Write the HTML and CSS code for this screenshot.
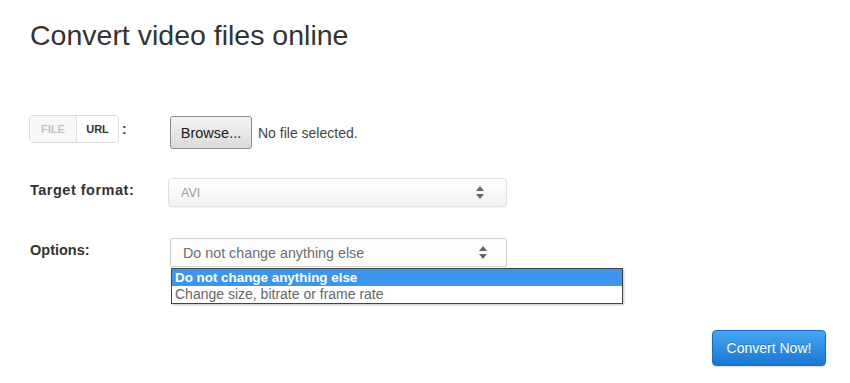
FILE: index.html
```html
<!DOCTYPE html>
<html>
<head>
<meta charset="utf-8">
<link rel="stylesheet" href="styles.css">
</head>
<body>
<div class="page">
  <h1 class="title">Convert video files online</h1>
  <div class="form">
    <div class="row row-file">
      <div class="label-cell">
        <div class="toggle"><span class="tab tab-file">FILE</span><span class="tab tab-url">URL</span></div>
        <span class="colon">:</span>
      </div>
      <div class="control">
        <button class="browse">Browse...</button>
        <span class="nofile">No file selected.</span>
      </div>
    </div>
    <div class="row row-target">
      <div class="label-cell"><span class="label label-target">Target format:</span></div>
      <div class="select select-target">
        <span class="value">AVI</span>
        <svg class="arrows" width="8" height="13" viewBox="0 0 8 13"><path d="M4 0 L8 5 L0 5 Z M0 8 L8 8 L4 13 Z" fill="#666"/></svg>
      </div>
    </div>
    <div class="row row-options">
      <div class="label-cell"><span class="label">Options:</span></div>
      <div class="opt-wrap">
        <div class="select select-options">
          <span class="value">Do not change anything else</span>
          <svg class="arrows" width="8" height="13" viewBox="0 0 8 13"><path d="M4 0 L8 5 L0 5 Z M0 8 L8 8 L4 13 Z" fill="#666"/></svg>
        </div>
        <ul class="dropdown">
          <li class="item item-active">Do not change anything else</li>
          <li class="item">Change size, bitrate or frame rate</li>
        </ul>
      </div>
    </div>
  </div>
  <div class="actions">
    <button class="convert">Convert Now!</button>
  </div>
</div>
</body>
</html>
```
FILE: styles.css
```css
html, body {
  margin: 0;
  padding: 0;
  background: #ffffff;
}
body {
  font-family: "Liberation Sans", Arial, sans-serif;
  color: #333;
  width: 850px;
  height: 383px;
  overflow: hidden;
}
.page {
  padding: 19px 24px 0 30px;
}
.title {
  margin: 0;
  font-size: 28.5px;
  line-height: 32px;
  font-weight: normal;
  color: #333;
}
.form {
  margin-top: 64px;
  display: flex;
  flex-direction: column;
}
.row {
  display: flex;
  align-items: flex-start;
}
.label-cell {
  width: 140px;
  flex: none;
  display: flex;
  align-items: center;
}
.label {
  font-size: 14.5px;
  font-weight: bold;
  color: #333;
}
.label-target {
  letter-spacing: 0.5px;
}
.row-file {
  height: 34px;
}
.row-file .label-cell {
  height: 28px;
}
.toggle {
  display: flex;
  width: 90px;
  height: 28px;
  box-sizing: border-box;
  border: 1px solid #dcdcdc;
  border-radius: 4px;
  overflow: hidden;
  margin-left: -1px;
}
.tab {
  display: flex;
  align-items: center;
  justify-content: center;
  font-size: 11px;
  font-weight: bold;
}
.tab-file {
  width: 46px;
  color: #c4c4c4;
  background: #f8f8f8;
  border-right: 1px solid #e2e2e2;
}
.tab-url {
  flex: 1;
  color: #333;
  background: #fff;
}
.colon {
  margin-left: 3px;
  font-size: 14px;
  font-weight: bold;
  color: #444;
}
.control {
  display: flex;
  align-items: center;
  margin-top: 1px;
}
.browse {
  width: 82px;
  height: 33px;
  box-sizing: border-box;
  border: 1px solid #8c8c8c;
  border-radius: 3px;
  background: linear-gradient(#f4f4f4, #dadada);
  font-family: "Liberation Sans", Arial, sans-serif;
  font-size: 14.5px;
  color: #222;
  padding: 0;
}
.nofile {
  margin-left: 6px;
  font-size: 14px;
  color: #444;
}
.row-target {
  margin-top: 29px;
}
.row-target .label-cell,
.row-options .label-cell {
  height: 24px;
}
.select {
  position: relative;
  box-sizing: border-box;
  height: 29px;
  display: flex;
  align-items: center;
  justify-content: space-between;
}
.select-target {
  width: 339px;
  margin-left: -2px;
  border: 1px solid #e0e0e0;
  border-radius: 4px;
  background: linear-gradient(#ffffff, #f2f2f2);
  box-shadow: 0 1px 2px rgba(0,0,0,0.06);
  padding: 0 22px 0 12px;
}
.select-target .value {
  font-size: 12.5px;
  color: #9a9a9a;
}
.row-options {
  margin-top: 31px;
}
.opt-wrap {
  position: relative;
}
.select-options {
  width: 337px;
  border: 1px solid #cfcfcf;
  border-radius: 2px;
  background: #fdfdfd;
  padding: 0 19px 0 12px;
}
.select-options .value {
  font-size: 14.3px;
  color: #6e6e6e;
}
.dropdown {
  position: absolute;
  left: 1px;
  top: 30px;
  width: 452px;
  box-sizing: border-box;
  margin: 0;
  padding: 0;
  list-style: none;
  background: #fff;
  border: 1px solid #444;
  box-shadow: 1px 1px 2px rgba(0,0,0,0.25);
}
.item {
  height: 17px;
  line-height: 17px;
  font-size: 14px;
  padding-left: 3px;
  color: #666;
}
.item-active {
  background: #3d95ee;
  color: #fff;
  font-weight: bold;
  font-size: 13.4px;
}
.actions {
  display: flex;
  justify-content: flex-end;
  margin-top: 63px;
}
.convert {
  width: 114px;
  height: 36px;
  box-sizing: border-box;
  border: 1px solid #1a6cbf;
  border-radius: 4px;
  background: linear-gradient(#45a6f2, #1a76d2);
  color: #fff;
  font-family: "Liberation Sans", Arial, sans-serif;
  font-size: 14px;
  text-shadow: 0 -1px 0 rgba(0,0,0,0.2);
  padding: 0;
  box-shadow: 0 1px 2px rgba(0,0,0,0.15);
}
```
